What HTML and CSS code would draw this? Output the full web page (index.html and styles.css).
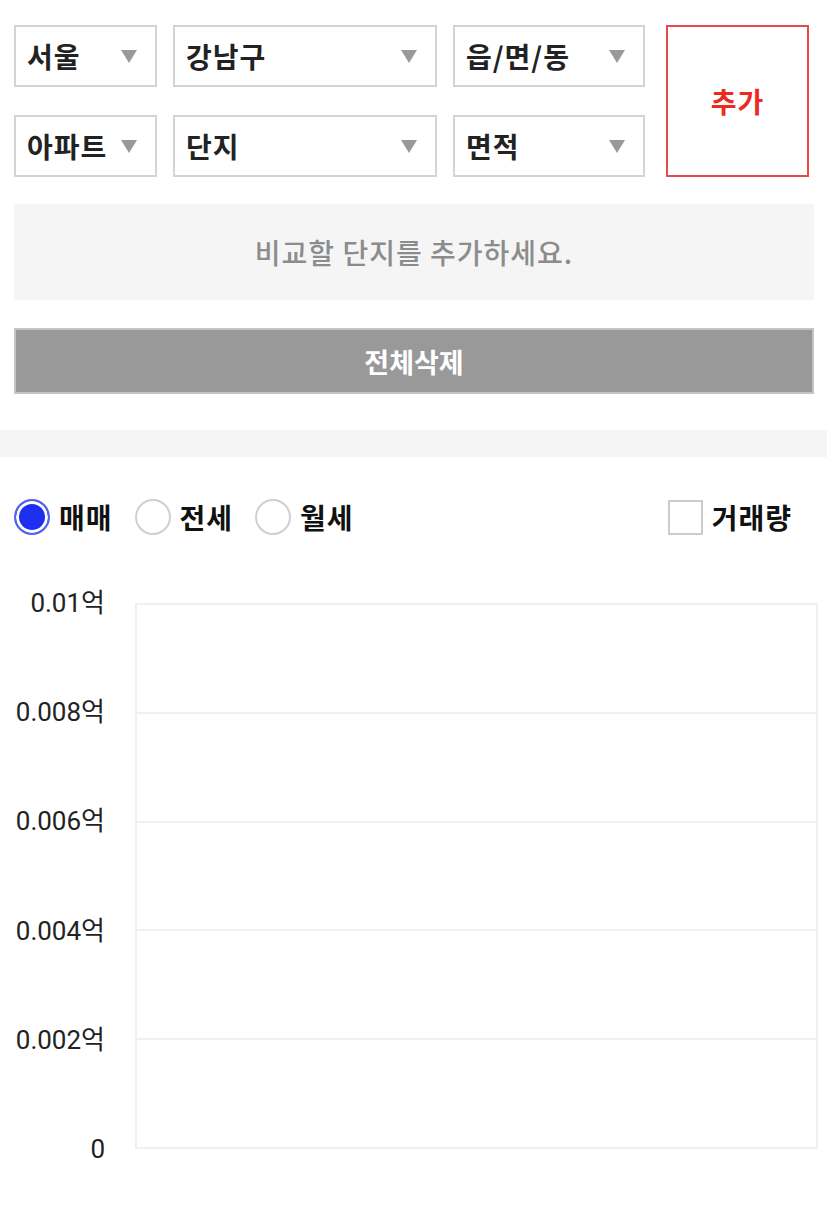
FILE: index.html
```html
<!DOCTYPE html>
<html>
<head>
<meta charset="utf-8">
<link rel="stylesheet" href="styles.css">
</head>
<body>
<div id="compareTop">
  <div id="filterGrid">
    <div class="selectBox"><span>서울</span><i class="arrow"></i></div>
    <div class="selectBox"><span>강남구</span><i class="arrow"></i></div>
    <div class="selectBox"><span>읍/면/동</span><i class="arrow"></i></div>
    <button id="addButton">추가</button>
    <div class="selectBox"><span>아파트</span><i class="arrow"></i></div>
    <div class="selectBox"><span>단지</span><i class="arrow"></i></div>
    <div class="selectBox"><span>면적</span><i class="arrow"></i></div>
  </div>
  <div id="emptyMessage">비교할 단지를 추가하세요.</div>
  <button id="deleteAllButton">전체삭제</button>
</div>

<div class="divider"></div>

<div id="chartSection">
  <div id="tradeOptions">
    <div class="radioGroup">
      <label class="radioItem"><span class="radio checked"></span>매매</label>
      <label class="radioItem"><span class="radio"></span>전세</label>
      <label class="radioItem"><span class="radio"></span>월세</label>
    </div>
    <label class="checkItem"><span class="checkbox"></span>거래량</label>
  </div>

  <div id="chart">
    <div class="yAxis">
      <div class="yLabel">0.01억</div>
      <div class="yLabel">0.008억</div>
      <div class="yLabel">0.006억</div>
      <div class="yLabel">0.004억</div>
      <div class="yLabel">0.002억</div>
      <div class="yLabel">0</div>
    </div>
    <div class="plotArea">
      <div class="gridRow"></div>
      <div class="gridRow"></div>
      <div class="gridRow"></div>
      <div class="gridRow"></div>
      <div class="gridRow"></div>
    </div>
  </div>
</div>
</body>
</html>
```

FILE: styles.css
```css
html, body {
  margin: 0;
  padding: 0;
  background: #fff;
}

body {
  font-family: "Noto Sans CJK KR", "Noto Sans", sans-serif;
  color: #222;
}

#compareTop {
  padding: 25px 13px 0 14px;
}

#filterGrid {
  display: grid;
  grid-template-columns: 143px 264px 192px 148px;
  grid-template-rows: 62px 62px;
  column-gap: 16px;
  row-gap: 28px;
}

.selectBox {
  display: flex;
  align-items: center;
  justify-content: space-between;
  box-sizing: border-box;
  border: 2px solid #d4d4d8;
  padding: 0 18px 0 11px;
  font-size: 28px;
  letter-spacing: 1px;
  font-weight: bold;
  color: #222;
  white-space: nowrap;
}

.arrow {
  width: 0;
  height: 0;
  border-left: 8px solid transparent;
  border-right: 8px solid transparent;
  border-top: 13px solid #999;
}

#addButton {
  grid-column: 4;
  grid-row: 1 / span 2;
  margin-left: 5px;
  background: #fff;
  border: 2px solid #e84a4a;
  color: #ee2a1f;
  font-family: inherit;
  font-size: 28px;
  letter-spacing: 1px;
  font-weight: bold;
  cursor: pointer;
}

#emptyMessage {
  margin-top: 27px;
  height: 96px;
  width: 800px;
  background: #f5f5f5;
  color: #8c8c8c;
  font-size: 28px;
  letter-spacing: 1px;
  font-weight: 500;
  display: flex;
  align-items: center;
  justify-content: center;
}

#deleteAllButton {
  display: block;
  margin-top: 28px;
  width: 800px;
  height: 66px;
  background: #999;
  border: 2px solid #c4c4c4;
  color: #fff;
  font-family: inherit;
  font-size: 27px;
  font-weight: bold;
  cursor: pointer;
}

.divider {
  margin-top: 36px;
  height: 27px;
  background: #f5f5f5;
}

#chartSection {
  padding: 40px 0 0 14px;
}

#tradeOptions {
  display: flex;
  align-items: center;
  justify-content: space-between;
  width: 778px;
}

.radioGroup {
  display: flex;
  gap: 22px;
}

.radioItem, .checkItem {
  display: flex;
  align-items: center;
  font-size: 28px;
  letter-spacing: 1px;
  font-weight: bold;
  color: #111;
}

.radio {
  width: 36px;
  height: 36px;
  box-sizing: border-box;
  border-radius: 50%;
  border: 2px solid #cfcfd6;
  background: #fff;
  margin-right: 9px;
}

.radio.checked {
  border-color: #5560f6;
  background: #1e2ff2;
  box-shadow: inset 0 0 0 3px #fff;
}

.checkbox {
  width: 35px;
  height: 35px;
  box-sizing: border-box;
  border: 2px solid #cbcbd3;
  margin-right: 9px;
}

#chart {
  display: flex;
  margin-top: 66px;
  margin-left: -14px;
}

.yAxis {
  width: 105px;
  height: 572px;
  margin-top: -13px;
  display: flex;
  flex-direction: column;
  justify-content: space-between;
  align-items: flex-end;
}

.yLabel {
  font-family: Roboto, "Noto Sans CJK KR", sans-serif;
  font-size: 26px;
  line-height: 26px;
  color: #222;
}

.plotArea {
  margin-left: 30px;
  width: 683px;
  height: 546px;
  box-sizing: border-box;
  border: 2px solid #f0f0f0;
  display: flex;
  flex-direction: column;
}

.gridRow {
  flex: 1;
  border-bottom: 2px solid #f0f0f0;
}

.gridRow:last-child {
  border-bottom: none;
}
```
